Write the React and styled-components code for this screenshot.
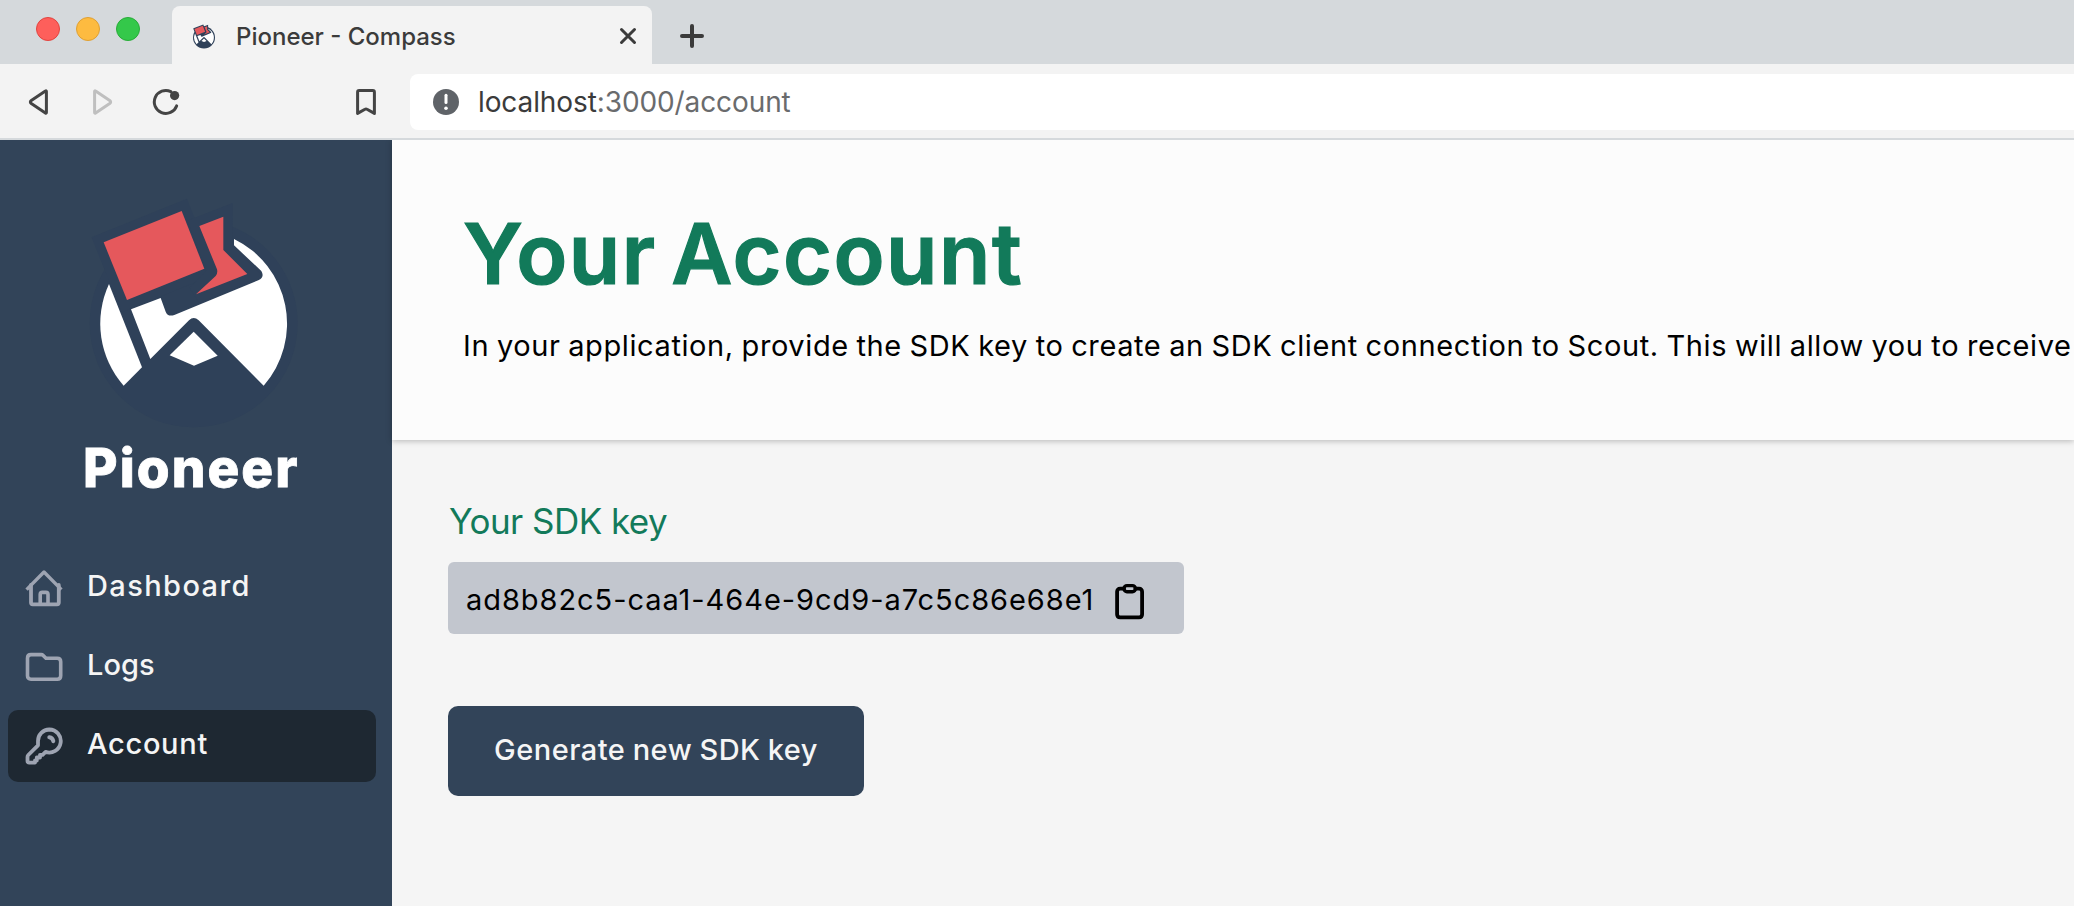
import React from "react";
import styled, { createGlobalStyle } from "styled-components";

const GlobalStyle = createGlobalStyle`
  * { box-sizing: border-box; }
  body { margin: 0; overflow: hidden; background: #f5f5f5; }
  h1, h2, p { margin: 0; font-weight: 400; }
  button { border: 0; padding: 0; background: none; font: inherit; color: inherit; }
  svg { display: block; flex: none; }
`;

const Window = styled.div`
  display: flex;
  flex-direction: column;
  height: 906px;
  overflow: hidden;
  font-family: Inter, "Open Sans", sans-serif;
`;

/* Browser chrome */
const TabStrip = styled.div`
  display: flex;
  height: 64px;
  flex: none;
  padding-left: 36px;
  background: #d5d9dc;
`;

const Lights = styled.div`
  display: flex;
  gap: 16px;
  width: 136px;
  padding-top: 17px;
`;

const Light = styled.span`
  width: 24px;
  height: 24px;
  border-radius: 50%;
  background: ${(p) => p.$fill};
  border: 1px solid ${(p) => p.$edge};
`;

const Tab = styled.div`
  display: flex;
  align-items: center;
  width: 480px;
  height: 58px;
  margin-top: 6px;
  padding: 2px 15px 0 21px;
  border-radius: 8px 8px 0 0;
  background: #f3f3f3;
`;

const TabTitle = styled.span`
  flex: 1;
  margin-left: 21px;
  font-size: 24px;
  font-weight: 500;
  color: #3b3b3b;
  white-space: nowrap;
`;

const NewTab = styled.button`
  display: flex;
  align-items: center;
  height: 58px;
  margin: 7px 0 0 28px;
`;

const Toolbar = styled.div`
  display: flex;
  align-items: center;
  height: 76px;
  flex: none;
  padding: 2px 0 0 28px;
  color: #444;
  background: #f3f3f3;
  border-bottom: 2px solid #d5d9dc;
`;

const ToolButton = styled.button`
  margin-right: ${(p) => p.$gap}px;
`;

const AddressBar = styled.div`
  display: flex;
  align-items: center;
  flex: 1;
  height: 56px;
  padding-left: 22px;
  border-radius: 8px 0 0 8px;
  background: #fff;
`;

const Address = styled.span`
  margin-left: 18px;
  font-size: 28px;
  letter-spacing: -0.1px;
  color: #6a6b6d;
  white-space: nowrap;
`;

const Host = styled.span`
  color: #3b3b3b;
`;

/* App shell */
const Shell = styled.div`
  display: flex;
  flex: 1;
  min-height: 0;
  overflow: hidden;
`;

const Sidebar = styled.aside`
  display: flex;
  flex-direction: column;
  width: 392px;
  flex: none;
  padding-top: 40px;
  background: #324459;
`;

const Brand = styled.div`
  height: 372px;
  padding-left: 70px;
`;

const BrandName = styled.div`
  margin-top: 8px;
  padding-left: 13px;
  font-size: 53px;
  font-weight: 800;
  line-height: 60px;
  letter-spacing: 2.1px;
  color: #fff;
  -webkit-text-stroke: 0.8px #fff;
`;

const Nav = styled.nav`
  display: flex;
  flex-direction: column;
  gap: 7px;
  padding: 0 16px 0 8px;
`;

const NavItem = styled.a`
  display: flex;
  align-items: center;
  height: 72px;
  padding-left: 16px;
  border-radius: 10px;
  color: #9ea4b2;
  background: ${(p) => (p.$active ? "#1e2832" : "transparent")};
`;

const NavLabel = styled.span`
  margin-left: 23px;
  padding-bottom: 5px;
  font-size: 29px;
  font-weight: 550;
  line-height: 40px;
  letter-spacing: ${(p) => p.$tracking}px;
  color: #f5f5f5;
`;

const Main = styled.main`
  flex: 1;
  min-width: 0;
  background: #f5f5f5;
`;

const PageHeader = styled.header`
  height: 300px;
  padding: 64px 0 0 71px;
  background: #fcfcfc;
  box-shadow: 0 1px 6px rgba(0, 0, 0, 0.26);
  white-space: nowrap;
  overflow: hidden;
`;

const Title = styled.h1`
  font-size: 84px;
  font-weight: 600;
  line-height: 100px;
  letter-spacing: 1.5px;
  word-spacing: -8px;
  color: #127a5a;
  -webkit-text-stroke: 1.2px #127a5a;
`;

const Intro = styled.p`
  margin-top: 21px;
  font-size: 29px;
  line-height: 42px;
  letter-spacing: 0.6px;
  word-spacing: -1px;
  color: #000;
`;

const Content = styled.section`
  display: flex;
  flex-direction: column;
  align-items: flex-start;
  padding: 60px 0 0 56px;
`;

const FieldLabel = styled.h2`
  padding-left: 1px;
  font-size: 35px;
  line-height: 42px;
  letter-spacing: -0.55px;
  color: #127a5a;
`;

const KeyField = styled.div`
  display: flex;
  align-items: center;
  width: 736px;
  height: 72px;
  margin-top: 20px;
  padding: 2px 0 0 18px;
  border-radius: 6px;
  background: #c2c6ce;
`;

const KeyValue = styled.span`
  width: 648px;
  font-size: 29px;
  letter-spacing: 0.95px;
  color: #000;
`;

const CopyButton = styled.button`
  padding-top: 6px;
`;

const PrimaryButton = styled.button`
  width: 416px;
  height: 90px;
  margin-top: 72px;
  padding-bottom: 3px;
  border-radius: 10px;
  background: #324459;
  color: #f5f5f5;
  font-size: 29px;
  font-weight: 550;
  letter-spacing: 0.5px;
  word-spacing: -1px;
`;

const Mark = ({ width, height, viewBox }) => (
  <svg width={width} height={height} viewBox={viewBox}>
    <g fill="#2f4159" stroke="#2f4159">
      <circle cx="371" cy="430" r="312" stroke="none" />
      <path d="M101 187L335 93L403 266L171 360Z" strokeWidth="56" />
      <path d="M388 138L460 110V210L532 282L378 343L441 280Z" strokeWidth="56" />
    </g>
    <g fill="#fff">
      <path d="M117 312L216 562L161 617A282 282 0 0 1 117 312Z" />
      <path d="M183 388L272 354L287 395Q293 411 313 405L565 301Q585 292 574 273L492 196V177A282 282 0 0 1 581 617L386 421Q371 407 357 421L241 537Z" />
      <path d="M371 455L443 527L372 557L299 526Z" />
    </g>
    <g fill="#e5585c">
      <path d="M101 187L335 93L403 266L171 360Z" />
      <path d="M388 138L460 110V210L532 282L378 343L437 288Q444 280 441 268Z" />
    </g>
  </svg>
);

const line = { fill: "none", strokeLinecap: "round", strokeLinejoin: "round" };

const HomeIcon = () => (
  <svg width="40" height="40" viewBox="0 0 40 40" stroke="currentColor" strokeWidth="3.8" {...line}>
    <path d="M3.8 20.4L20 4L36.2 20.4" strokeLinecap="square" strokeWidth="3.4" />
    <path d="M7 17V34.5Q7 36.3 8.8 36.3H33Q34.8 36.3 34.8 34.5V17" />
    <path d="M16.2 36V26.5Q16.2 24.4 18.3 24.4H21.9Q24 24.4 24 26.5V36" strokeWidth="3.6" />
  </svg>
);

const FolderIcon = () => (
  <svg width="40" height="40" viewBox="0 0 40 40" stroke="currentColor" strokeWidth="3.6" {...line}>
    <path d="M3.5 11.2Q3.5 7.6 7 7.6H17.2Q18.4 7.6 19.2 8.4L22 11.2H33.2Q36.7 11.2 36.7 14.7V28.7Q36.7 32.2 33.2 32.2H7Q3.5 32.2 3.5 28.7Z" />
  </svg>
);

const KeyIcon = () => (
  <svg width="40" height="40" viewBox="0 0 40 40" stroke="currentColor" strokeWidth="3.8" {...line}>
    <path d="M25.3 3.5A11.5 11.5 0 1 1 21.6 25.9L18.6 28.8H16V31.5H12.8V34.5H11V36.6H5.2Q3.5 36.6 3.5 34.9V31Q3.5 29.8 4.3 29L14 19.3V15A11.5 11.5 0 0 1 25.3 3.5Z" />
    <path d="M25.3 11.2Q28.7 11.7 29.3 15.2" strokeWidth="4" />
  </svg>
);

const ClipboardIcon = () => (
  <svg width="32" height="40" viewBox="0 0 32 40" stroke="#000" strokeWidth="3.8" {...line}>
    <path d="M10 6.7H6.2Q3.1 6.7 3.1 9.8V32.2Q3.1 35.3 6.2 35.3H25Q28.1 35.3 28.1 32.2V9.8Q28.1 6.7 25 6.7H21.4" />
    <rect x="10" y="3.6" width="11.4" height="6.2" rx="3" strokeWidth="3.4" />
  </svg>
);

const BackIcon = () => (
  <svg width="20" height="28" viewBox="0 0 20 28" stroke="currentColor" strokeWidth="3" {...line}>
    <path d="M18.4 3.5V24.5Q18.4 25.6 17.4 24.9L3.3 15.5Q1.4 14 3.3 12.5L17.4 3.1Q18.4 2.4 18.4 3.5Z" />
  </svg>
);

const ForwardIcon = () => (
  <svg width="20" height="28" viewBox="0 0 20 28" stroke="#bfbfbf" strokeWidth="3" {...line}>
    <path d="M1.6 3.5V24.5Q1.6 25.6 2.6 24.9L16.7 15.5Q18.6 14 16.7 12.5L2.6 3.1Q1.6 2.4 1.6 3.5Z" />
  </svg>
);

const ReloadIcon = () => (
  <svg width="28" height="28" viewBox="0 0 28 28" stroke="currentColor" strokeWidth="3" {...line}>
    <path d="M18.8 3.6A11.5 11.5 0 1 0 24.6 17.9" />
    <circle cx="22.6" cy="7.6" r="4.6" fill="currentColor" stroke="none" />
  </svg>
);

const BookmarkIcon = () => (
  <svg width="20" height="28" viewBox="0 0 20 28" stroke="currentColor" strokeWidth="3" {...line}>
    <path d="M1.6 4.2Q1.6 2.6 3.2 2.6H16.8Q18.4 2.6 18.4 4.2V25.4L11 21.2Q10 20.6 9 21.2L1.6 25.4Z" />
  </svg>
);

const CloseIcon = () => (
  <svg width="18" height="18" viewBox="0 0 18 18" stroke="#3b3b3b" strokeWidth="3" {...line}>
    <path d="M2.5 2.5L15.5 15.5M15.5 2.5L2.5 15.5" />
  </svg>
);

const PlusIcon = () => (
  <svg width="24" height="24" viewBox="0 0 24 24" stroke="#3b3b3b" strokeWidth="4" {...line}>
    <path d="M12 2V22M2 12H22" />
  </svg>
);

const InfoIcon = () => (
  <svg width="28" height="28" viewBox="0 0 28 28">
    <circle cx="14" cy="14" r="13" fill="#5f6368" />
    <path d="M14 7.2V14.6" stroke="#fff" strokeWidth="3" strokeLinecap="round" />
    <circle cx="14" cy="20.2" r="1.8" fill="#fff" />
  </svg>
);

const navItems = [
  { label: "Dashboard", Icon: HomeIcon, tracking: 1.4 },
  { label: "Logs", Icon: FolderIcon, tracking: 0 },
  { label: "Account", Icon: KeyIcon, tracking: 0.7, active: true },
];

export default function App() {
  return (
    <Window>
      <GlobalStyle />
      <TabStrip>
        <Lights>
          <Light $fill="#fe5f5b" $edge="#e2443f" />
          <Light $fill="#fdbb40" $edge="#dfa033" />
          <Light $fill="#34c84a" $edge="#28ac38" />
        </Lights>
        <Tab>
          <Mark width={22} height={25} viewBox="59 48 624 704" />
          <TabTitle>Pioneer - Compass</TabTitle>
          <CloseIcon />
        </Tab>
        <NewTab aria-label="New tab">
          <PlusIcon />
        </NewTab>
      </TabStrip>
      <Toolbar>
        <ToolButton aria-label="Back" $gap={45}>
          <BackIcon />
        </ToolButton>
        <ToolButton aria-label="Forward" $gap={39}>
          <ForwardIcon />
        </ToolButton>
        <ToolButton aria-label="Reload" $gap={176}>
          <ReloadIcon />
        </ToolButton>
        <ToolButton aria-label="Bookmark" $gap={34}>
          <BookmarkIcon />
        </ToolButton>
        <AddressBar>
          <InfoIcon />
          <Address>
            <Host>localhost</Host>:3000/account
          </Address>
        </AddressBar>
      </Toolbar>
      <Shell>
        <Sidebar>
          <Brand>
            <Mark width={250} height={250} viewBox="0 0 750 750" />
            <BrandName>Pioneer</BrandName>
          </Brand>
          <Nav>
            {navItems.map(({ label, Icon, tracking, active }) => (
              <NavItem key={label} $active={active}>
                <Icon />
                <NavLabel $tracking={tracking}>{label}</NavLabel>
              </NavItem>
            ))}
          </Nav>
        </Sidebar>
        <Main>
          <PageHeader>
            <Title>Your Account</Title>
            <Intro>
              In your application, provide the SDK key to create an SDK client connection to Scout. This will allow you to receive
            </Intro>
          </PageHeader>
          <Content>
            <FieldLabel>Your SDK key</FieldLabel>
            <KeyField>
              <KeyValue>ad8b82c5-caa1-464e-9cd9-a7c5c86e68e1</KeyValue>
              <CopyButton aria-label="Copy SDK key">
                <ClipboardIcon />
              </CopyButton>
            </KeyField>
            <PrimaryButton>Generate new SDK key</PrimaryButton>
          </Content>
        </Main>
      </Shell>
    </Window>
  );
}
